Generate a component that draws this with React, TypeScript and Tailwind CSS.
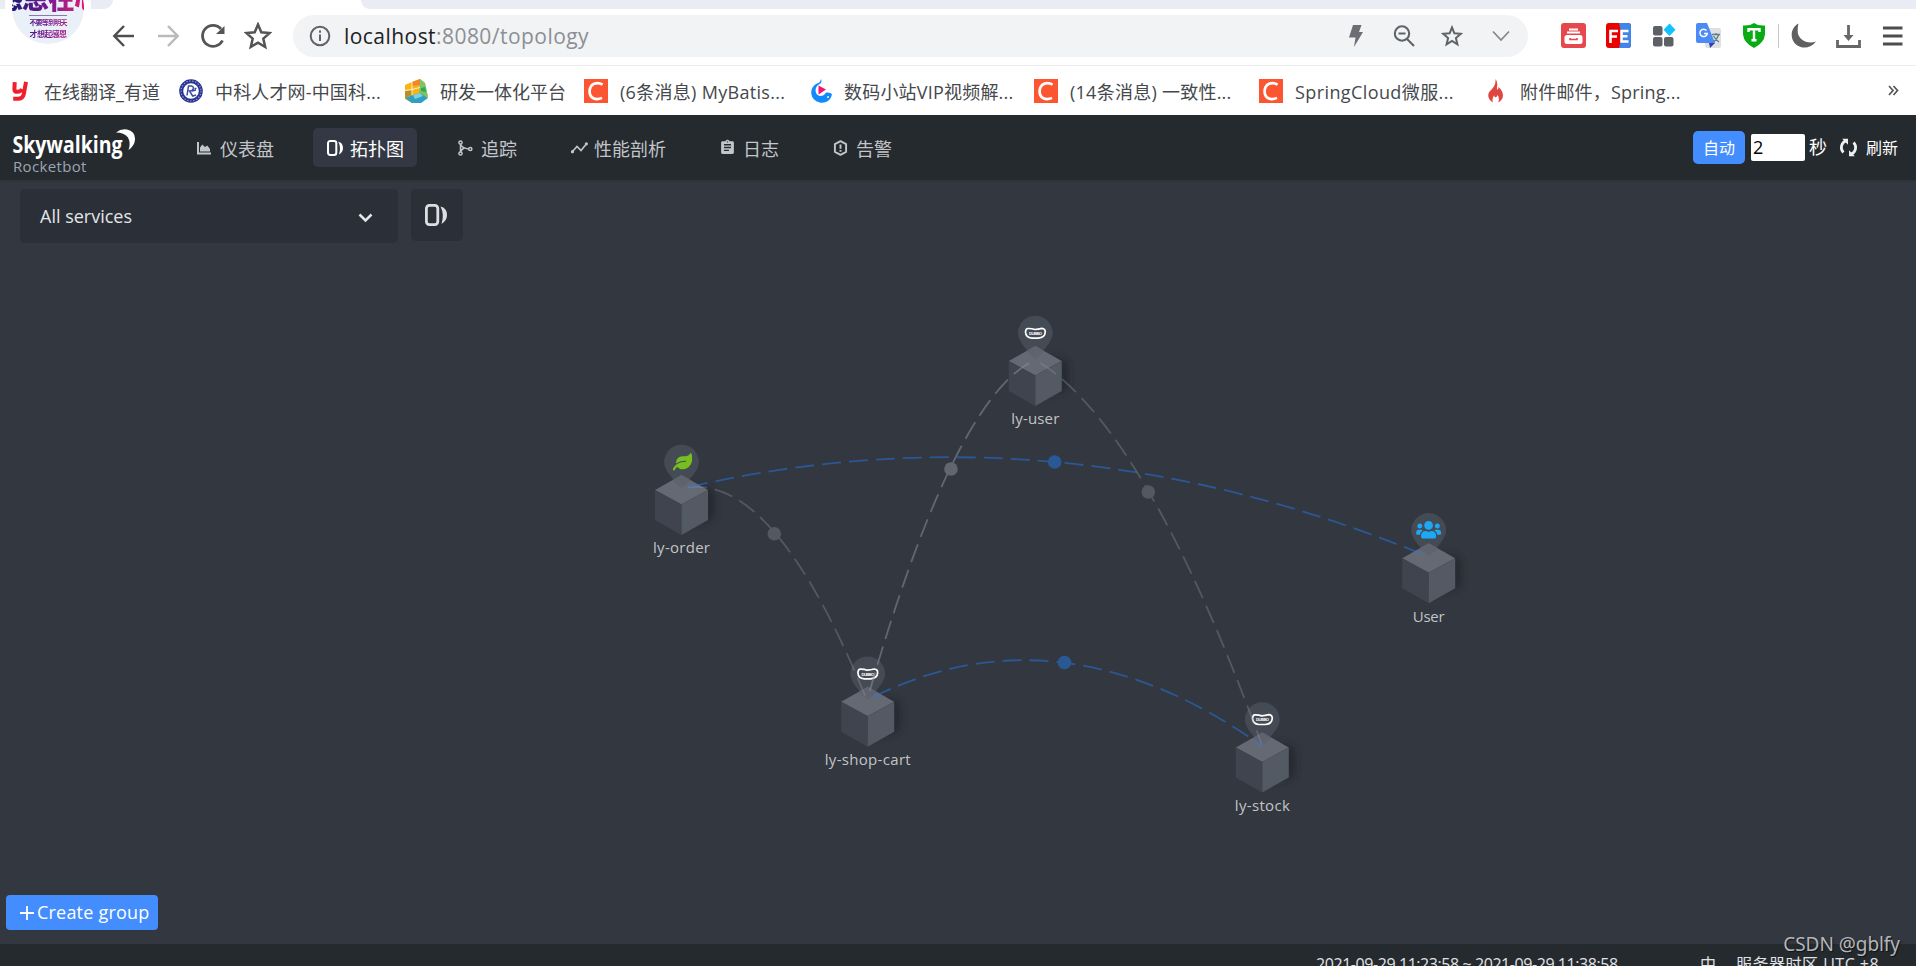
import React from "react";
import { FaUsers, FaLeaf } from "react-icons/fa";
import { MdAssignment } from "react-icons/md";

const CJK = "font-['Open_Sans','Noto_Sans_CJK_SC',sans-serif]";

function CsdnIcon() {
  return (
    <svg width="24" height="24" viewBox="0 0 24 24">
      <rect width="24" height="24" fill="#fc5531" />
      <path d="M18.6 5.6C13 2.4 6 4.6 5.6 12c-.2 7.400 6.200 9.800 12.400 6.900" fill="none" stroke="#fff" strokeWidth="2.700" />
    </svg>
  );
}

function YoudaoIcon() {
  return (
    <svg width="16" height="20" viewBox="0 0 16 20">
      <path d="M2.700 1.200 2.400 8.500q.2 2.500 3 2.300Q8.700 10.700 10 8M14 .8 11.800 13q-1 4.800-6 4.800H1.200" fill="none" stroke="#ef1f2d" strokeWidth="4" />
    </svg>
  );
}

function SealIcon() {
  return (
    <svg width="24" height="24" viewBox="0 0 24 24">
      <circle cx="12" cy="12" r="9.800" fill="#fff" stroke="#27338f" strokeWidth="4" />
      <circle cx="12" cy="12" r="10" fill="none" stroke="#8e96cc" strokeWidth="1.200" strokeDasharray="1.500 1.500" />
      <path d="M8 16.500 9.500 7h3q2.800.8 1.500 3.500-1 1.500-3.500 1.500l3.500 5.500M15.500 9.500h2M13 12l4-1M14 17l3-1" fill="none" stroke="#3f4ca5" strokeWidth="1.500" />
    </svg>
  );
}

function BlocksIcon() {
  return (
    <svg width="24" height="24" viewBox="0 0 24 24">
      <path d="M1 6 8 3l8-3 5 4 3 14-7 6H8l-7-4Z" fill="#f8b410" />
      <path d="m8 3 8-3v6l-8 1Z" fill="#f5832a" />
      <path d="m16 0 5 4 3 14-9-3Z" fill="#7cc46a" />
      <path d="m17 9 4-1 1 5-5-1Z" fill="#2fa84f" />
      <path d="m1 19 8-3 7-2 8 5-7 5H8Z" fill="#2f9fc4" />
      <path d="m9 16 7-2 3 3-8 3Z" fill="#7fd0e0" />
      <path d="m1 12 7-1v5l-7 3Z" fill="#b8902a" />
      <path d="M8 3v13M1 11.500l7-1 8-2" stroke="#fff" strokeWidth=".8" fill="none" />
    </svg>
  );
}

function WhaleIcon() {
  return (
    <svg width="22" height="24" viewBox="0 0 22 24">
      <path d="M10 0q-1 4-4 4.600C1 7-1 12 1 17.500 4 23 10 25 15 23q5-2 6-8-2-2-6-1.500-2 3.500-6 3.500Q4.500 16 4.500 11 5 7 8.500 5 11.500 4 10 0Z" fill="#118bfb" />
      <path d="M7.500 6.500 15 10.500l-7.500 5Z" fill="#f7136c" />
      <circle cx="17" cy="18" r=".9" fill="#fff" />
    </svg>
  );
}

function FlameIcon() {
  return (
    <svg width="16" height="24" viewBox="0 0 16 24">
      <path d="M7.500 0Q10 3 9 7.500 8.700 9.500 9.500 11 10.500 10 10.500 8 15 12 15 16.500q-.2 4.500-5 7 2-3.500-.3-7.500Q9 18 7 18.500 6 17.500 6.500 16 3.500 19 5 23.500-.5 20 .4 15 1 12.500 4 10 8 6 7.500 0Z" fill="#e0453f" />
    </svg>
  );
}

type Mark = { w: string; slot: string; icon: React.ReactNode; text: string; cls: string };
const marks: Mark[] = [
  { w: "w-[167px]", slot: "w-[32px]", icon: <YoudaoIcon />, text: "在线翻译_有道", cls: "" },
  { w: "w-[225px]", slot: "w-[36px]", icon: <SealIcon />, text: "中科人才网-中国科...", cls: "tracking-[0.15px]" },
  { w: "w-[180px]", slot: "w-[36px]", icon: <BlocksIcon />, text: "研发一体化平台", cls: "" },
  { w: "w-[227px]", slot: "w-[36px]", icon: <CsdnIcon />, text: "(6条消息) MyBatis...", cls: "tracking-[0.3px]" },
  { w: "w-[223px]", slot: "w-[33px]", icon: <WhaleIcon />, text: "数码小站VIP视频解...", cls: "tracking-[0.2px]" },
  { w: "w-[225px]", slot: "w-[36px]", icon: <CsdnIcon />, text: "(14条消息) 一致性...", cls: "tracking-[0.25px]" },
  { w: "w-[229px]", slot: "w-[36px]", icon: <CsdnIcon />, text: "SpringCloud微服...", cls: "tracking-[0.4px]" },
  { w: "w-[300px]", slot: "w-[32px]", icon: <FlameIcon />, text: "附件邮件，Spring...", cls: "tracking-[0.2px]" },
];

function TopologyIcon({ size }: { size: number }) {
  return (
    <svg width={size} height={size} viewBox="0 0 22 22">
      <rect x="1.400" y="1.400" width="11.400" height="19.200" rx="3" strokeWidth="2.800" fill="none" stroke="currentColor" />
      <path d="M15.500 2.500Q22 4 22 11 22 16.500 16.500 20 18 15 17.800 11 17.800 7 15.500 2.500Z" fill="currentColor" />
    </svg>
  );
}

const navIcons = {
  chart: (
    <svg width="14" height="14" viewBox="0 0 14 14" fill="currentColor">
      <path d="M0 1h2v10.500h12v2H0ZM3 10.500V6.500l2.300-3L8 6l2.300-1.500L13 8v2.500Z" />
    </svg>
  ),
  topo: <TopologyIcon size={16} />,
  trace: (
    <svg className="ml-[1px]" width="15" height="16" viewBox="0 0 15 16" fill="none" stroke="currentColor" strokeWidth="1.500">
      <circle cx="2.500" cy="2.500" r="1.600" />
      <circle cx="2.500" cy="13.500" r="1.600" />
      <circle cx="12.300" cy="9" r="1.600" />
      <path d="M2.500 4v8M2.600 4.500q2 4 8 4.400M2.600 12q1-3 4-4.200" />
    </svg>
  ),
  profile: (
    <svg width="17" height="12" viewBox="0 0 17 12" fill="none" stroke="currentColor" strokeWidth="1.600">
      <path d="m1.500 9.500 4.500-5 4 4 5.300-6.500" />
      <circle cx="1.500" cy="9.700" r=".8" fill="currentColor" />
      <circle cx="15.400" cy="1.800" r=".8" fill="currentColor" />
    </svg>
  ),
  log: <MdAssignment size={17} className="-ml-[1px]" />,
  alarm: (
    <svg width="15" height="16" viewBox="0 0 15 16" fill="none" stroke="currentColor" strokeWidth="1.900">
      <path d="m7.500 1.200 5.600 3v7.600l-5.600 3-5.600-3V4.200Z" strokeLinejoin="round" />
      <path d="M7.500 4.500v4.300M7.500 10v1.800" strokeWidth="1.900" />
    </svg>
  ),
};

const nav = [
  { icon: navIcons.chart, text: "仪表盘", w: "w-[104px]", slot: "w-[23px]", on: false },
  { icon: navIcons.topo, text: "拓扑图", w: "w-[104px]", slot: "w-[23px]", on: true },
  { icon: navIcons.trace, text: "追踪", w: "w-[88px]", slot: "w-[24px]", on: false },
  { icon: navIcons.profile, text: "性能剖析", w: "w-[123px]", slot: "w-[23px]", on: false },
  { icon: navIcons.log, text: "日志", w: "w-[87px]", slot: "w-[23px]", on: false },
  { icon: navIcons.alarm, text: "告警", w: "w-[87px]", slot: "w-[23px]", on: false },
];

function Chrome() {
  return (
    <div className="h-[115px] shrink-0 bg-white relative overflow-hidden">
      <div className="flex h-[9px] justify-between">
        <div className="w-[113px] bg-[#e9ecf5] rounded-br-[9px]" />
        <div className="w-[1555px] bg-[#e9ecf5] rounded-bl-[9px]" />
      </div>
      <div className="absolute left-[5px] -top-[36px] w-[86px] h-[86px] rounded-full bg-white" />
      <div className="absolute left-[12px] -top-[28px] w-[72px] h-[72px] rounded-full bg-[#e9f0f8] overflow-hidden">
        <div className="mt-[9px] flex flex-col items-center text-transparent bg-clip-text bg-linear-to-r from-[#1d1575] via-[#7a1490] to-[#e01275]">
          <span className="text-[27px] leading-[34px] font-black whitespace-nowrap -tracking-[1px] font-['Noto_Sans_CJK_SC',sans-serif]">感恩在心</span>
          <span className="border-t border-[#8a7aa8] text-[7px] leading-[11px] pt-[1px] font-bold whitespace-nowrap tracking-[-0.8px] font-['Noto_Sans_CJK_SC',sans-serif]">不要等到明天</span>
          <span className="text-[8px] leading-[12px] font-bold whitespace-nowrap tracking-[-0.6px] font-['Noto_Sans_CJK_SC',sans-serif]">才想起感恩</span>
        </div>
      </div>
      <div className="flex h-[57px] items-center pl-[112px] pr-[13px] pb-[3px] border-b border-[#ececee]">
        <svg className="w-[23px] mr-[22px] shrink-0" height="24" viewBox="0 0 23 24" fill="none" stroke="#4f4f4f" strokeWidth="2.500"><path d="M22 12H2.500M12 2 2.300 12l9.700 10" /></svg>
        <svg className="w-[23px] mr-[20px] shrink-0" height="24" viewBox="0 0 23 24" fill="none" stroke="#bababa" strokeWidth="2.500"><path d="M1 12h19.500M11 2l9.700 10L11 22" /></svg>
        <svg className="w-[26px] mr-[18px] shrink-0" height="26" viewBox="0 0 26 26" fill="none" stroke="#555" strokeWidth="2.800"><path d="M22.500 17.500A10.500 10.500 0 1 1 21 6" /><path d="M24.500 3v8H16Z" fill="#555" stroke="none" /></svg>
        <svg className="w-[28px] mr-[21px] shrink-0" height="28" viewBox="0 0 28 28" fill="none" stroke="#555" strokeWidth="2.500"><path d="m14 2.500 3.300 7.800 8.200.8-6.200 5.500 1.900 8.400-7.200-4.400L6.800 25l1.900-8.400-6.200-5.500 8.200-.8Z" /></svg>
        <div className="h-[42px] w-[1235px] shrink-0 rounded-full bg-[#f1f3f4] flex items-center pl-[16px] pr-[18px]">
          <svg width="22" height="22" viewBox="0 0 22 22" fill="none" stroke="#5f6368" strokeWidth="2"><circle cx="11" cy="11" r="9.300" /><path d="M11 9.500v6.500M11 5.500v2.300" /></svg>
          <span className="ml-[13px] text-[21px] leading-[30px] tracking-[0.450px] text-[#8b8f94] font-['Open_Sans',sans-serif] whitespace-nowrap"><span className="text-[#202124]">localhost</span>:8080/topology</span>
          <div className="ml-auto flex items-center">
            <svg className="mr-[30px]" width="14" height="22" viewBox="0 0 14 22" fill="#6b6e72"><path d="M4 0h8.500L10 7h4L5 22l1.500-9.500H0Z" /></svg>
            <svg className="mr-[26px]" width="22" height="22" viewBox="0 0 22 22" fill="none" stroke="#5f6368" strokeWidth="2.100"><circle cx="9" cy="8.500" r="7.200" /><path d="m14 14 7 7M5.500 8.500h7" /></svg>
            <svg className="mr-[29px]" width="22" height="22" viewBox="0 0 22 22" fill="none" stroke="#5f6368" strokeWidth="2"><path d="m11 2.500 2.400 5.800 6.400.5-4.900 4.200 1.500 6.300-5.400-3.400-5.400 3.400 1.500-6.300-4.900-4.200 6.400-.5Z" /></svg>
            <svg width="18" height="12" viewBox="0 0 18 12" fill="none" stroke="#888" strokeWidth="1.800"><path d="m1 1.500 8 8.500 8-8.500" /></svg>
          </div>
        </div>
        <svg className="ml-[33px] shrink-0" width="25" height="25" viewBox="0 0 25 25"><rect width="25" height="25" rx="3" fill="#e5484d" /><path d="M8 6.500h9M6 9.500h13" stroke="#fff" strokeWidth="1.800" /><rect x="3.500" y="12" width="18" height="9" rx="2.500" fill="#fff" /><path d="M9 15v1.500h7V15" fill="none" stroke="#e5484d" strokeWidth="1.600" /></svg>
        <svg className="ml-[20px] shrink-0" width="25" height="25" viewBox="0 0 25 25"><rect width="25" height="25" rx="3" fill="#e90000" /><path d="M13 0h9a3 3 0 0 1 3 3v19a3 3 0 0 1-3 3h-9l3-12Z" fill="#4285ea" /><path d="M4.500 20V8h7.500M4.500 13.500H11M22.500 8h-7v10.500h7M15.500 13.200h6" fill="none" stroke="#fff" strokeWidth="2.600" /></svg>
        <svg className="ml-[21px] shrink-0" width="24" height="25" viewBox="0 0 24 25" fill="#5d6166"><rect x="1" y="3" width="9.500" height="9.500" rx="2" /><rect x="1" y="14" width="9.500" height="9.500" rx="2" /><rect x="12" y="14" width="9.500" height="9.500" rx="2" /><path d="m17.500.5 6 6.300-6 6.300-6-6.300Z" fill="#12c2ff" /></svg>
        <svg className="ml-[20px] shrink-0" width="26" height="26" viewBox="0 0 26 26"><rect x="9" y="5" width="16" height="20" rx="2" fill="#dfe0e2" /><path d="M2 0h9l8 20H2a2 2 0 0 1-2-2V2a2 2 0 0 1 2-2Z" fill="#4c8bf5" /><path d="m13 20 6 0-5 5Z" fill="#3740a8" /><path d="M10.500 7.500A3.700 3.700 0 1 0 11.300 10.500H8" fill="none" stroke="#fff" strokeWidth="1.500" /><path d="M16 11.500h8M20 10v1.500M22.500 12q-1 4-5 7M17.500 13q2 3.500 5.500 6" fill="none" stroke="#607d8b" strokeWidth="1.300" /></svg>
        <svg className="ml-[20px] shrink-0" width="24" height="25" viewBox="0 0 24 25"><path d="M12 0q4 3 11 2.500v9Q22 20 12 25 2 20 1 11.500v-9Q8 3 12 0Z" fill="#08ab14" /><path d="M6.500 9V6.200h11V9M12 6.500v11M9.500 17.300h5" fill="none" stroke="#fff" strokeWidth="2.400" /></svg>
        <div className="ml-[12px] w-px h-[24px] bg-[#c9c9c9] shrink-0" />
        <svg className="ml-[12px] shrink-0" width="26" height="26" viewBox="0 0 26 26"><path d="M7.500.5C1 4-.5 11 1.500 16.500 5 25.500 18 28 25 18.500 16 22 7.500 16 6.800 9.500 6.500 6 6.800 3 7.500.5Z" fill="#606060" /></svg>
        <svg className="ml-[19px] shrink-0" width="25" height="26" viewBox="0 0 25 26" fill="none" stroke="#666" strokeWidth="2.800"><path d="M1.500 17v6.500h22V17M12.500 2v13" /><path d="m7.500 12 5 6 5-6Z" fill="#666" stroke="none" /></svg>
        <svg className="ml-[22px] shrink-0" width="20" height="20" viewBox="0 0 20 20" stroke="#4d4d4d" strokeWidth="2.800"><path d="M0 2h19.500M0 10h19.500M0 18h19.500" /></svg>
      </div>
      <div className="flex h-[49px] items-center pl-[12px]">
        {marks.map((m) => (
          <div key={m.text} className={`flex items-center shrink-0 ${m.w}`}>
            <div className={`shrink-0 ${m.slot}`}>{m.icon}</div>
            <span className={`mt-[2px] text-[18px] leading-[26px] text-[#45484c] whitespace-nowrap ${CJK} ${m.cls}`}>{m.text}</span>
          </div>
        ))}
        <span className="ml-auto" />
        <svg className="mr-[17px] shrink-0" width="11" height="11" viewBox="0 0 11 11" fill="none" stroke="#555" strokeWidth="1.700"><path d="m1 1 4 4.500L1 10M5.500 1l4 4.500-4 4.500" /></svg>
      </div>
    </div>
  );
}

function Header() {
  return (
    <header className="h-[65px] shrink-0 bg-[#252a2f] flex items-center relative z-10 shadow-[0_1px_2px_rgba(0,0,0,0.15)]">
      <div className="w-[183px] h-full shrink-0 pl-[12px] pt-[14px] flex flex-col">
        <svg className="shrink-0" width="126" height="32" viewBox="12 129 126 32">
          <text x="12.500" y="153" fontFamily="Open Sans" fontSize="22.500" fontWeight="700" fill="#fff" textLength="110" lengthAdjust="spacingAndGlyphs">Skywalking</text>
          <path d="M116 132.500Q121 128.500 127 129.500 135.500 131.500 135 139.500 134.500 146 128.500 150 131 143 128 137.500 124 132.500 116 132.500Z" fill="#fff" />
        </svg>
        <span className="-mt-[4px] text-[15px] leading-[18px] tracking-[0.35px] text-[#9da5b2] font-['Open_Sans',sans-serif] pl-[1px]">Rocketbot</span>
      </div>
      <nav className="flex gap-[26px]">
        {nav.map((n) => (
          <div key={n.text} className={`h-[39px] rounded-[5px] flex items-center pl-[14px] ${n.w} ${n.on ? "bg-[#333844] text-white" : "text-[#c3c5c9]"}`}>
            <span className={`shrink-0 ${n.slot}`}>{n.icon}</span>
            <span className={`mt-[3px] text-[18px] leading-[26px] whitespace-nowrap ${CJK}`}>{n.text}</span>
          </div>
        ))}
      </nav>
      <div className={`ml-auto pr-[18px] flex items-center text-white ${CJK}`}>
        <button className="w-[52px] h-[33px] rounded-[5px] bg-[#448dfe] text-[16px]">自动</button>
        <div className="ml-[6px] w-[54px] h-[27px] rounded-[2px] bg-white text-black text-[18px] leading-[26px] pl-[2px]">2</div>
        <span className="ml-[4px] text-[18px]">秒</span>
        <svg className="ml-[12px]" width="19" height="19" viewBox="0 0 18 18" fill="none" stroke="#f0f0f0" strokeWidth="2.600"><path d="M6.500 2.500a7 7 0 0 0-2.300 11.300M11.500 15.500a7 7 0 0 0 2.300-11.300" /><path d="M3 .8h5.500v5.500ZM15 17.200H9.500v-5.500Z" fill="#f0f0f0" stroke="none" /></svg>
        <span className="ml-[8px] text-[16px]">刷新</span>
      </div>
    </header>
  );
}

type Kind = "dubbo" | "spring" | "user";
const nodes: { x: number; y: number; name: string; len: number; kind: Kind }[] = [
  { x: 1035.3, y: 346, name: "ly-user", len: 48, kind: "dubbo" },
  { x: 681.5, y: 475, name: "ly-order", len: 57, kind: "spring" },
  { x: 1428.7, y: 543.3, name: "User", len: 32, kind: "user" },
  { x: 867.7, y: 686.7, name: "ly-shop-cart", len: 86, kind: "dubbo" },
  { x: 1262.3, y: 732.4, name: "ly-stock", len: 55, kind: "dubbo" },
];

const links = [
  { d: "M1029 363Q950.600 409 867.700 698", cx: 951, cy: 469, c: "#8a8e98", o: 0.55 },
  { d: "M1040.700 363Q1147.600 432 1262 745", cx: 1148.3, cy: 492, c: "#8a8e98", o: 0.38 },
  { d: "M688 487.500Q775 475.500 866 698", cx: 774.3, cy: 533.7, c: "#8a8e98", o: 0.38 },
  { d: "M689 487Q1054 403.500 1421.700 554", cx: 1054.7, cy: 462, c: "#217ef2", o: 0.47 },
  { d: "M873.300 697Q1060.800 604 1262.300 746", cx: 1064.5, cy: 662.5, c: "#217ef2", o: 0.47 },
];

function Topology() {
  return (
    <svg className="absolute inset-0" width="1916" height="764" viewBox="0 180 1916 764">
      <defs>
        <filter id="soft" x="-50%" y="-50%" width="200%" height="200%"><feGaussianBlur stdDeviation="3.500" /></filter>
      </defs>
      {nodes.map((n) => (
        <g key={n.name} transform={`translate(${n.x} ${n.y})`}>
          <path d="M0 12 28 12l5 6v24l-7 5L0 50Z" fill="#1d2026" opacity=".6" filter="url(#soft)" />
          <path d="M0-30.200A17.400 17.400 0 0 1 17.400-13C17.400-4 8 4 0 13-8 4-17.400-4-17.400-13A17.400 17.400 0 0 1 0-30.200Z" fill="#454b55" />
          <path d="M0 0 26.500 15 0 29.500-26.500 15Z" fill="#646974" />
          <path d="M-9 5 0 0l9 5Q5 9 0 13-5 9-9 5Z" fill="#5e636f" />
          <path d="M-26.500 15 0 29.500V60L-26.500 45Z" fill="#40444f" />
          <path d="M26.500 15 0 29.500V60L26.500 45Z" fill="#535a64" />
          {n.kind === "dubbo" && (
            <g>
              <path d="M-7.500-17.500Q-3.500-17.600-.5-16.500 3-17 6.500-17.700 10.300-17.500 9.900-13.500 9.500-8.500 3-7.900H-3.500Q-9.500-8.300-9.800-14-9.600-17.300-7.500-17.500Z" fill="none" stroke="#fff" strokeWidth="1.700" />
              <text x="0.300" y="-11" fontFamily="Liberation Sans" fontWeight="700" fontSize="4.200" fill="#fff" textAnchor="middle" textLength="13">DUBBO</text>
            </g>
          )}
          {n.kind === "spring" && <FaLeaf x={-8.7} y={-23} size={19.500} color="#78be20" />}
          {n.kind === "user" && <FaUsers x={-12.6} y={-26} size={25} color="#1ba8f5" />}
          <text x="0" y="78.300" fontFamily="Open Sans" fontSize="15" fill="#c2c4c7" textAnchor="middle" textLength={n.len}>{n.name}</text>
        </g>
      ))}
      {links.map((l) => (
        <g key={l.d} opacity={l.o}>
          <path d={l.d} fill="none" stroke={l.c} strokeWidth="1.800" strokeDasharray="19 8" />
          <circle cx={l.cx} cy={l.cy} r="6.800" fill={l.c} />
        </g>
      ))}
    </svg>
  );
}

export default function App() {
  return (
    <div className="w-[1916px] h-[966px] overflow-hidden flex flex-col bg-[#333840]">
      <Chrome />
      <Header />
      <main className="relative h-[764px] shrink-0 bg-[#333740] flex flex-col justify-between">
        <Topology />
        <div className="relative flex pl-[20px] pt-[9px] gap-[13px]">
          <div className="w-[378px] h-[54px] rounded-[5px] bg-[#2b2f37] flex items-center pl-[20px] pr-[25px] text-[#e4e6e8]">
            <span className="text-[18px] font-['Open_Sans',sans-serif]">All services</span>
            <svg className="ml-auto mt-[3px]" width="15" height="10" viewBox="0 0 15 10" fill="none" stroke="currentColor" strokeWidth="2.500"><path d="m1.500 1.500 6 6 6-6" /></svg>
          </div>
          <div className="w-[52px] h-[52px] rounded-[5px] bg-[#2b2f37] flex items-center pl-[14px] text-[#dcdee0]">
            <TopologyIcon size={22} />
          </div>
        </div>
        <div className="relative pl-[6px] pb-[14px]">
          <button className="w-[152px] h-[35px] rounded-[4px] bg-[#448dfe] text-white flex items-center pl-[14px]">
            <svg width="14" height="14" viewBox="0 0 14 14" stroke="#fff" strokeWidth="1.800"><path d="M0 7h14M7 0v14" /></svg>
            <span className="ml-[3px] text-[18px] whitespace-nowrap tracking-[0.2px] font-['Open_Sans',sans-serif]">Create group</span>
          </button>
        </div>
        <div className="absolute right-[16px] -bottom-[15px] z-20 text-[19px] tracking-[-0.05px] leading-[30px] text-[#b4b6b9] whitespace-nowrap font-['Noto_Sans',sans-serif] [text-shadow:1px_1px_1px_rgba(0,0,0,0.6)]">CSDN @gblfy</div>
      </main>
      <footer className={`h-[22px] shrink-0 overflow-hidden bg-[#252a2f] flex items-start text-[16px] leading-[24px] pt-[8px] text-[#e0e2e4] whitespace-nowrap ${CJK}`}>
        <span className="ml-[1316px] w-[384px] shrink-0 tracking-[-0.43px]">2021-09-29 11:23:58 ~ 2021-09-29 11:38:58</span>
        <span className="w-[36px] shrink-0">中</span>
        <span className="tracking-[0.5px]">服务器时区 UTC +8</span>
      </footer>
    </div>
  );
}
